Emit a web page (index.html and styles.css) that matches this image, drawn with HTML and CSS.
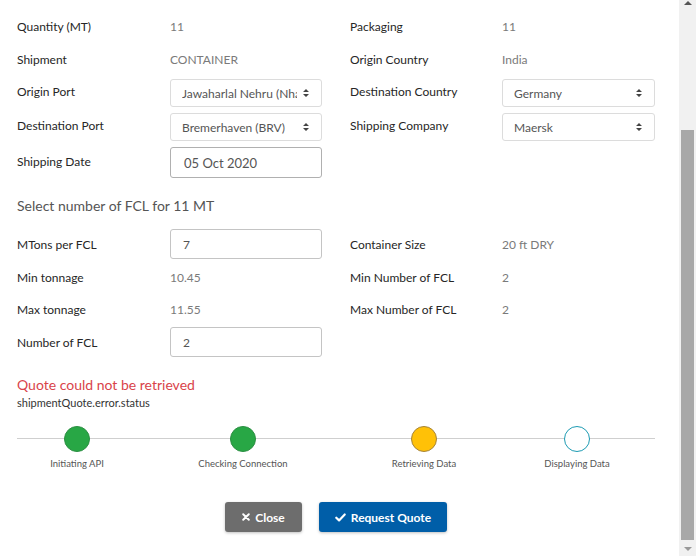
FILE: index.html
```html
<!DOCTYPE html>
<html lang="en">
<head>
<meta charset="utf-8">
<title>Shipment Quote</title>
<link rel="stylesheet" href="styles.css">
</head>
<body>
<div class="window">
  <main class="modal">
    <section class="details details--top">
      <div class="row row--first">
        <span class="label">Quantity (MT)</span><span class="value">11</span>
        <span class="label">Packaging</span><span class="value">11</span>
      </div>
      <div class="row">
        <span class="label">Shipment</span><span class="value">CONTAINER</span>
        <span class="label">Origin Country</span><span class="value">India</span>
      </div>
      <div class="row row--control">
        <span class="label">Origin Port</span>
        <div class="select"><span class="select-text">Jawaharlal Nehru (Nhava Sheva)</span><svg class="sort" viewBox="0 0 6 10" width="6" height="10"><path d="M0 4L3 1L6 4Z M0 6L3 9L6 6Z" fill="#444"/></svg></div>
        <span class="label">Destination Country</span>
        <div class="select select--wide"><span class="select-text">Germany</span><svg class="sort" viewBox="0 0 6 10" width="6" height="10"><path d="M0 4L3 1L6 4Z M0 6L3 9L6 6Z" fill="#444"/></svg></div>
      </div>
      <div class="row row--control">
        <span class="label">Destination Port</span>
        <div class="select"><span class="select-text">Bremerhaven (BRV)</span><svg class="sort" viewBox="0 0 6 10" width="6" height="10"><path d="M0 4L3 1L6 4Z M0 6L3 9L6 6Z" fill="#444"/></svg></div>
        <span class="label">Shipping Company</span>
        <div class="select select--wide"><span class="select-text">Maersk</span><svg class="sort" viewBox="0 0 6 10" width="6" height="10"><path d="M0 4L3 1L6 4Z M0 6L3 9L6 6Z" fill="#444"/></svg></div>
      </div>
      <div class="row row--input row--control">
        <span class="label">Shipping Date</span>
        <div class="input input--date">05 Oct 2020</div>
      </div>
    </section>

    <h3 class="subhead">Select number of FCL for 11 MT</h3>

    <section class="details details--fcl">
      <div class="row row--input">
        <span class="label">MTons per FCL</span>
        <div class="input">7</div>
        <span class="label">Container Size</span><span class="value">20 ft DRY</span>
      </div>
      <div class="row">
        <span class="label">Min tonnage</span><span class="value">10.45</span>
        <span class="label">Min Number of FCL</span><span class="value">2</span>
      </div>
      <div class="row">
        <span class="label">Max tonnage</span><span class="value">11.55</span>
        <span class="label">Max Number of FCL</span><span class="value">2</span>
      </div>
      <div class="row row--input">
        <span class="label">Number of FCL</span>
        <div class="input">2</div>
      </div>
    </section>

    <p class="error">Quote could not be retrieved</p>
    <p class="status">shipmentQuote.error.status</p>

    <div class="steps">
      <div class="step"><span class="dot dot--done"></span><span class="step-label">Initiating API</span></div>
      <div class="step"><span class="dot dot--done"></span><span class="step-label">Checking Connection</span></div>
      <div class="step"><span class="dot dot--active"></span><span class="step-label">Retrieving Data</span></div>
      <div class="step"><span class="dot dot--pending"></span><span class="step-label">Displaying Data</span></div>
    </div>

    <div class="actions">
      <button class="btn btn--close"><svg viewBox="0 0 10 10" width="8" height="8"><path d="M1.5 1.5L8.5 8.5M8.5 1.5L1.5 8.5" stroke="#fff" stroke-width="2.4" stroke-linecap="round"/></svg>Close</button>
      <button class="btn btn--primary"><svg viewBox="0 0 12 10" width="11" height="9"><path d="M1.3 5.2L4.4 8.2L10.7 1.6" fill="none" stroke="#fff" stroke-width="2.4" stroke-linecap="round" stroke-linejoin="round"/></svg>Request Quote</button>
    </div>
  </main>

  <div class="scrollbar">
    <svg class="arrow arrow--up" viewBox="0 0 8 5" width="8" height="5"><path d="M0 5L4 1L8 5Z" fill="#555"/></svg>
    <div class="thumb"></div>
    <svg class="arrow arrow--down" viewBox="0 0 8 5" width="8" height="5"><path d="M0 0L4 4L8 0Z" fill="#999"/></svg>
  </div>
</div>
</body>
</html>
```

FILE: styles.css
```css
* { box-sizing: border-box; }

html, body {
  margin: 0;
  padding: 0;
  background: #fff;
}

body {
  font-family: Lato, "Open Sans", "Liberation Sans", sans-serif;
  color: #333;
}

.window {
  display: flex;
  height: 556px;
  overflow: hidden;
}

.modal {
  flex: 1;
  padding: 0 24px 0 17px;
}

.details {
  display: flex;
  flex-direction: column;
}

.details--top {
  gap: 6px;
  padding-top: 13px;
}

.details--fcl {
  gap: 4px;
}

.row {
  display: grid;
  grid-template-columns: 153px 180px 152px 153px;
  align-items: center;
  height: 28px;
}

.row--first {
  height: 26px;
}

.row--input {
  height: 31px;
}

.details--fcl .row--input {
  height: 30px;
}

.label {
  font-size: 12px;
  color: #262626;
  font-weight: 400;
}

.row--control .label {
  padding-bottom: 3px;
}

.value {
  font-size: 12px;
  color: #7a7a7a;
  font-weight: 400;
}

.select {
  display: flex;
  align-items: center;
  width: 152px;
  height: 28px;
  border: 1px solid #dcdcdc;
  border-radius: 3px;
  padding: 0 12px 0 11px;
  background: #fff;
}

.select--wide {
  width: 153px;
}

.select-text {
  flex: 1;
  overflow: hidden;
  white-space: nowrap;
  font-size: 12px;
  color: #555;
  margin-right: 6px;
}

.sort {
  flex: none;
}

.input {
  display: flex;
  align-items: center;
  width: 152px;
  height: 100%;
  border: 1px solid #c4c4c4;
  border-radius: 3px;
  padding: 0 12px;
  font-size: 12px;
  color: #555;
}

.input--date {
  font-size: 13px;
  padding-left: 13px;
  border-color: #b0b0b0;
}

.subhead {
  margin: 18px 0 13px;
  font-size: 14px;
  line-height: 20px;
  font-weight: 400;
  color: #555;
}

.error {
  margin: 19px 0 0;
  font-size: 14px;
  line-height: 18px;
  color: #d9434a;
}

.status {
  margin: 2px 0 0;
  font-size: 11px;
  line-height: 14px;
  color: #333;
}

.steps {
  display: grid;
  grid-template-columns: 120px 212px 150px 156px;
  margin-top: 16px;
  background: linear-gradient(#cfcfcf, #cfcfcf) no-repeat 0 12px / 100% 1px;
}

.step {
  display: flex;
  flex-direction: column;
  align-items: center;
}

.dot {
  width: 26px;
  height: 26px;
  border-radius: 50%;
  border: 1px solid;
}

.dot--done {
  background: #28a745;
  border-color: #2b8f42;
}

.dot--active {
  background: #ffc107;
  border-color: #a5843a;
}

.dot--pending {
  background: #fff;
  border-color: #1d9bb3;
}

.step-label {
  margin-top: 6px;
  font-size: 9.5px;
  line-height: 12px;
  color: #555;
}

.actions {
  display: flex;
  justify-content: center;
  gap: 17px;
  margin-top: 32px;
}

.btn {
  display: flex;
  align-items: center;
  justify-content: center;
  gap: 5px;
  height: 30px;
  border: none;
  border-radius: 3px;
  color: #fff;
  font-family: Lato, "Open Sans", "Liberation Sans", sans-serif;
  font-size: 12px;
  font-weight: 700;
  box-shadow: 0 1px 3px rgba(0, 0, 0, 0.25);
}

.btn--close {
  width: 77px;
  background: #6d6d6d;
}

.btn--primary {
  width: 128px;
  background: #005ea8;
}

.scrollbar {
  flex: none;
  width: 17px;
  background: #f1f1f1;
  display: flex;
  flex-direction: column;
  align-items: center;
}

.thumb {
  width: 13px;
  height: 410px;
  margin-top: 125px;
  background: #a8a8a8;
}

.arrow--down {
  margin-top: 7px;
}
```
